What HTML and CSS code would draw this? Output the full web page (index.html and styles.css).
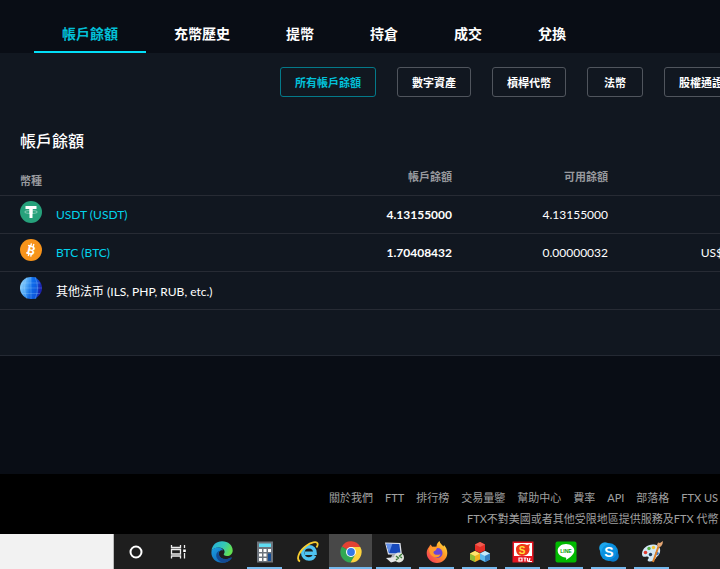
FILE: index.html
```html
<!DOCTYPE html>
<html lang="zh-Hant">
<head>
	<meta charset="UTF-8">
	<meta name="viewport" content="width=device-width, initial-scale=1.0">
	<title>帳戶餘額</title>
	<link rel="stylesheet" href="styles.css">
</head>
<body>
	<nav class="tabs">
		<a class="tab active" href="#balances">帳戶餘額</a>
		<a class="tab" href="#deposits">充幣歷史</a>
		<a class="tab" href="#withdraw">提幣</a>
		<a class="tab" href="#positions">持倉</a>
		<a class="tab" href="#fills">成交</a>
		<a class="tab" href="#convert">兌換</a>
	</nav>

	<main class="panel">
		<div class="filters">
			<button class="filter active">所有帳戶餘額</button>
			<button class="filter">數字資產</button>
			<button class="filter">槓桿代幣</button>
			<button class="filter">法幣</button>
			<button class="filter">股權通證</button>
		</div>
		<h1>帳戶餘額</h1>
		<table class="balances">
			<thead>
				<tr>
					<th class="coin-col">幣種</th>
					<th class="num-col">帳戶餘額</th>
					<th class="num-col">可用餘額</th>
					<th class="usd-col"></th>
				</tr>
			</thead>
			<tbody>
				<tr>
					<td>
						<div class="coin">
							<svg class="coin-icon" viewBox="0 0 22 22">
								<circle cx="11" cy="11" r="11" fill="#26a17b"/>
								<path d="M5.500 5h11v3h-4v9h-3V8h-4z" fill="#fff"/>
								<ellipse cx="11" cy="11" rx="6.500" ry="1.500" fill="none" stroke="#a8dac9" stroke-width=".7"/>
								<path d="M9.500 8h3v5h-3z" fill="#fff"/>
							</svg>
							<a href="#usdt">USDT (USDT)</a>
						</div>
					</td>
					<td class="total">4.13155000</td>
					<td>4.13155000</td>
					<td></td>
				</tr>
				<tr>
					<td>
						<div class="coin">
							<svg class="coin-icon" viewBox="0 0 22 22">
								<circle cx="11" cy="11" r="11" fill="#f7931a"/>
								<g transform="rotate(14 11 11)">
									<path d="M9.800 4.500v3M12.300 4.500v3M9.800 14.500v3M12.300 14.500v3M7 7.300h3M7 14.800h3" stroke="#fff" stroke-width="1.400"/>
									<text class="btc-letter" x="11.300" y="15.500" text-anchor="middle">B</text>
								</g>
							</svg>
							<a href="#btc">BTC (BTC)</a>
						</div>
					</td>
					<td class="total">1.70408432</td>
					<td>0.00000032</td>
					<td>US$</td>
				</tr>
				<tr>
					<td>
						<div class="coin">
							<svg class="coin-icon" viewBox="0 0 22 22">
								<defs>
									<linearGradient id="globe" x1="0" y1="0" x2="1" y2="0.3">
										<stop offset="0" stop-color="#a5e2ff"/>
										<stop offset=".4" stop-color="#4aa3f5"/>
										<stop offset=".6" stop-color="#1672e8"/>
										<stop offset="1" stop-color="#1b22ae"/>
									</linearGradient>
								</defs>
								<circle cx="11" cy="11" r="11" fill="url(#globe)"/>
								<path d="M11 0h5c3 5 3 17 0 22h-5z" fill="#0868ed" opacity=".6"/>
								<path d="M2 6h18M0 11h22M2 16.500h18M11 0v22M7 0q-5 11 0 22M15 0q5 11 0 22" fill="none" stroke="#b5e3ff" stroke-width=".7" opacity=".35"/>
							</svg>
							<span>其他法币 (ILS, PHP, RUB, etc.)</span>
						</div>
					</td>
					<td></td>
					<td></td>
					<td></td>
				</tr>
			</tbody>
		</table>
	</main>

	<footer class="footer">
		<div class="footer-links">
			<a href="#about">關於我們</a>
			<a href="#ftt">FTT</a>
			<a href="#leaderboard">排行榜</a>
			<a href="#volume">交易量鑒</a>
			<a href="#help">幫助中心</a>
			<a href="#fees">費率</a>
			<a href="#api">API</a>
			<a href="#blog">部落格</a>
			<a href="#us">FTX US</a>
		</div>
		<p>FTX不對美國或者其他受限地區提供服務及FTX 代幣（</p>
	</footer>

	<div class="taskbar">
		<input class="search" type="text" aria-label="Search">
		<button class="task" aria-label="Cortana">
			<svg viewBox="0 0 22 22"><circle cx="11" cy="11" r="5.500" fill="none" stroke="#fff" stroke-width="2"/></svg>
		</button>
		<button class="task" aria-label="Task View">
			<svg viewBox="0 0 22 22">
				<path d="M3.500 4v2.500h9V4M3.500 17.500V15h9v2.500M3.500 8.500h9v4.500h-9zM16.500 4v3M16.500 12v5.500" fill="none" stroke="#eee" stroke-width="1.300"/>
				<path d="M15.200 8.500h2.600v2.500h-2.600z" fill="#fff"/>
			</svg>
		</button>
		<button class="task" aria-label="Edge">
			<svg viewBox="0 0 22 22">
				<defs>
					<linearGradient id="edgeTop" x1="0" y1="0" x2="1" y2=".4">
						<stop offset="0" stop-color="#24a9df"/>
						<stop offset=".6" stop-color="#35c9b5"/>
						<stop offset="1" stop-color="#62e052"/>
					</linearGradient>
					<linearGradient id="edgeLow" x1="0" y1="0" x2="1" y2="1">
						<stop offset="0" stop-color="#1b9de2"/>
						<stop offset="1" stop-color="#0d59a9"/>
					</linearGradient>
				</defs>
				<path d="M.5 10C1 4 5.500.3 11 .3c6.500 0 10.700 4.200 10.700 9.200 0 3.500-2.700 5.500-5.700 5.500-2.500 0-4-1-3-2.200C15 10 12 6.500 8 6.500 4.500 6.500 1.500 8 .5 10z" fill="url(#edgeTop)"/>
				<path d="M.4 11C.7 8 4 6.300 8 6.500c2 .1 4 1.500 4 3-3-1-5 2-4 4.800 1.500 4 7 5.500 12 2.200.6-.3.900.1.500.700C18.500 20.200 15 21.800 11 21.800 5 21.800 0 17 .4 11z" fill="url(#edgeLow)"/>
				<path d="M8.300 9.700c-3 1.300-4 5-2 8 1.500 2.300 4 3.800 6.700 4 3-.2 6-2 7.500-4.500.4-.6.100-1-.5-.7-5 3-10.500 1.500-12-2.200-.7-1.800-.5-3.400.3-4.600z" fill="#124a93"/>
			</svg>
		</button>
		<button class="task running" aria-label="Calculator">
			<svg viewBox="0 0 22 22">
				<path d="M3 .5h16v21H3z" fill="#6d747d"/>
				<path d="M5 2.500h12v3.500H5z" fill="#5fdcf2"/>
				<path d="M5 8h3v3H5zM9.500 8h3v3h-3zM14 8h3v3h-3zM5 12.500h3v3H5zM9.500 12.500h3v3h-3zM5 17h3v3H5zM9.500 17h3v3h-3z" fill="#fff"/>
				<path d="M14 12.500h3V20h-3z" fill="#154c92"/>
			</svg>
		</button>
		<button class="task" aria-label="Internet Explorer">
			<svg viewBox="0 0 22 22">
				<path d="M17.500 14.500c-1 2.300-3 3.500-5.500 3.500-3.500 0-6.200-2.500-6.200-6s2.700-6.200 6.200-6.200c3.700 0 6 2.400 6 6.400H8" fill="none" stroke="#4fc4f2" stroke-width="3.600"/>
				<path d="M3 20.500C-1.500 18 2.500 9.500 9 5c5-3.700 10.500-5 11.500-2.700.5 1.200 0 2.700-1 4.200" fill="none" stroke="#f8ce31" stroke-width="1.800"/>
			</svg>
		</button>
		<button class="task running current" aria-label="Chrome">
			<svg viewBox="0 0 22 22">
				<path d="M11 11L1.900 5.500A10.500 10.500 0 0 1 20.300 6H11z" fill="#e34133"/>
				<path d="M11 11L1.900 5.500A10.500 10.500 0 0 0 10.500 21.500L15.300 13.500z" fill="#31a852"/>
				<path d="M11 6h9.300A10.500 10.500 0 0 1 10.500 21.500l4.800-8z" fill="#fdd33d"/>
				<circle cx="11" cy="11" r="5" fill="#fff"/>
				<circle cx="11" cy="11" r="3.900" fill="#3478e6"/>
			</svg>
		</button>
		<button class="task running" aria-label="Remote">
			<svg viewBox="0 0 22 22">
				<path d="M2 1.500l15.500.5 1.500 12-14-.5z" fill="#dfe3ec"/>
				<path d="M3.300 2.800l13 .3 1.200 9.500-11.500-.4z" fill="#1649bc"/>
				<path d="M3.300 2.800l6 .1L6 12.200z" fill="#6492ec"/>
				<path d="M9 14h4l1 3H8z" fill="#aeb4bd"/>
				<path d="M3 17l10-1 4 3-9 2.500z" fill="#e3e5e7"/>
				<circle cx="16" cy="16.500" r="5" fill="#e2e5dd"/>
				<path d="M13 15l2.500 2-2.500 2M19 13l-2.500 2 2.500 2" fill="none" stroke="#387c38" stroke-width="1.300"/>
			</svg>
		</button>
		<button class="task running" aria-label="Firefox">
			<svg viewBox="0 0 22 22">
				<defs>
					<linearGradient id="fox" x1="1" y1="0" x2="0" y2="1">
						<stop offset="0" stop-color="#fff04a"/>
						<stop offset=".4" stop-color="#ff9b25"/>
						<stop offset="1" stop-color="#f42c60"/>
					</linearGradient>
				</defs>
				<path d="M4.500 3.500L6.500 6l4-.5C10.500 3 12 1 13.500 0c.5 2.500 2.500 3.500 4 5.500l.5-1.500c2 2 3.300 4.800 3.300 8C21.300 17.500 16.700 22 11 22S.7 17.500.7 12c0-2.500.9-4.500 2.300-6z" fill="url(#fox)"/>
				<circle cx="11.500" cy="12" r="5" fill="#6b45d8"/>
				<path d="M3 7c3-2 6-1.500 8 .5L9 10c-2 0-2 2.500 0 3.500 2.500 1 4-.5 5.500 0-1 2.500-4 3.500-6.500 2.500C4 14.500 3 10.500 3 7z" fill="#ff9a2c"/>
			</svg>
		</button>
		<button class="task running" aria-label="Cubes">
			<svg viewBox="0 0 22 22">
				<path d="M11 1l5 2.500v6L11 12 6 9.500v-6z" fill="#e52e26"/>
				<path d="M11 1l5 2.500-5 2.500-5-2.500z" fill="#ee5c50"/>
				<path d="M6 10l5 2.500v6L6 21l-5-2.500v-6z" fill="#f4b321"/>
				<path d="M1 12.500L6 15v6l-5-2.500z" fill="#8fbd37"/>
				<path d="M6 10l5 2.500L6 15l-5-2.500z" fill="#ffe36e"/>
				<path d="M16 10l5 2.500v6L16 21l-5-2.500v-6z" fill="#5cb7ed"/>
				<path d="M16 10l5 2.500-5 2.500-5-2.500z" fill="#c5e8fa"/>
				<path d="M16 15l5-2.500v6L16 21z" fill="#347fc3"/>
			</svg>
		</button>
		<button class="task running" aria-label="Stocks">
			<svg viewBox="0 0 22 22">
				<path d="M.5.500h21v21H.5z" fill="#e51420"/>
				<path d="M2 2h18v13H2z" fill="#fff"/>
				<path d="M4 8c0-5 7-6 11-4l3-1-1 3c2 5-2 9-7 9-4 0-6-3-6-7z" fill="#ef3518"/>
				<text class="stock-letter" x="10" y="12.500" text-anchor="middle">S</text>
				<path d="M7 17h3v3H7zM11.500 17h3M13 17v3.500M15.500 17v3h1M18 17l-1 3.500h3" fill="none" stroke="#fff" stroke-width="1.200"/>
			</svg>
		</button>
		<button class="task running" aria-label="LINE">
			<svg viewBox="0 0 22 22">
				<rect x=".5" y=".5" width="21" height="21" rx="2" fill="#00b900"/>
				<path d="M11 3c4.700 0 8.300 2.900 8.300 6.700 0 3.500-4.300 6.800-8.300 9.300.3-1.200.5-2.400-.5-2.600C6 16 2.700 13.300 2.700 9.700 2.700 5.900 6.300 3 11 3z" fill="#fff"/>
				<text class="line-letters" x="11" y="12" text-anchor="middle">LINE</text>
			</svg>
		</button>
		<button class="task running" aria-label="Skype">
			<svg viewBox="0 0 22 22">
				<circle cx="11" cy="11" r="9" fill="#0a90df"/>
				<circle cx="7" cy="7" r="5.800" fill="#1ba5ec"/>
				<circle cx="15" cy="15" r="5.800" fill="#087bce"/>
				<circle cx="11" cy="11" r="7.500" fill="#0b91e0"/>
				<text class="skype-letter" x="11" y="15.800" text-anchor="middle">S</text>
			</svg>
		</button>
		<button class="task running" aria-label="Paint">
			<svg viewBox="0 0 22 22">
				<path d="M1 13C1 7 7 3 13 3.500c4.500.5 7 3.500 6 7.500s-3 4-4 6-4 4-7 3.500c-2-.4-1.500-2-.5-3s-.5-2.500-2-2c-2 .7-4.500.5-4.500-2.500z" fill="#d2e7f5"/>
				<circle cx="4.500" cy="11.500" r="1.800" fill="#df3a32"/>
				<circle cx="8" cy="7.500" r="1.700" fill="#55ad44"/>
				<circle cx="12.500" cy="6.500" r="1.700" fill="#f3c533"/>
				<circle cx="16" cy="12.500" r="1.800" fill="#3a79c8"/>
				<circle cx="9.500" cy="13.500" r="1.700" fill="#1d3a5a"/>
				<path d="M18 4l-6 17" stroke="#dc7f29" stroke-width="2"/>
				<path d="M16 4l1-2.500 2 .5 3-2-.5 3-1.500 2.500-2 .5z" fill="#e4a673"/>
			</svg>
		</button>
	</div>
</body>
</html>
```

FILE: styles.css
```css
* {
	box-sizing: border-box;
}

body {
	margin: 0;
	min-height: 100vh;
	display: flex;
	flex-direction: column;
	overflow-x: hidden;
	font-family: Lato, "Noto Sans CJK TC", sans-serif;
	font-size: 12px;
	color: #fff;
	background-color: #090d15;
}

a {
	color: #02d3ec;
	text-decoration: none;
}

.tabs {
	display: flex;
	padding: 16px 34px 0;
}

.tab {
	padding: 0 28px;
	font-size: 14px;
	font-weight: bold;
	line-height: 35px;
	color: #fff;
	border-bottom: 2px solid transparent;
}

.tab.active {
	color: #02c0d8;
	border-bottom-color: #02def7;
}

.panel {
	padding: 14px 0 45px;
	overflow: hidden;
	background-color: #111720;
	border-bottom: 1px solid #242933;
}

.filters {
	display: flex;
	gap: 21px;
	margin-left: 280px;
}

.filter {
	flex: none;
	height: 30px;
	min-width: 56px;
	padding: 0 14px;
	font-family: inherit;
	font-size: 11px;
	font-weight: bold;
	color: #fff;
	background: none;
	border: 1px solid #50555d;
	border-radius: 3px;
	cursor: pointer;
}

.filter.active {
	color: #02c0d8;
	border-color: #047989;
}

h1 {
	margin: 32px 20px 0;
	font-size: 16px;
	font-weight: 500;
	line-height: 24px;
}

/* last column runs past the right edge */
.balances {
	width: calc(100% + 23px);
	table-layout: fixed;
	border-collapse: collapse;
}

.balances th {
	height: 42px;
	padding: 5px 20px 0;
	font-size: 11px;
	font-weight: bold;
	text-align: right;
	color: #989a9e;
}

.balances .coin-col {
	padding-top: 12px;
	text-align: left;
}

.num-col {
	width: 156px;
}

.usd-col {
	width: 115px;
}

.balances tr {
	border-bottom: 1px solid #272b34;
}

.balances td {
	height: 38px;
	padding: 0 20px;
	text-align: right;
	white-space: nowrap;
}

.balances .total {
	font-weight: bold;
}

.coin {
	display: flex;
	align-items: center;
	gap: 14px;
}

.coin-icon {
	width: 22px;
	height: 22px;
	margin-bottom: 4px;
}

.btc-letter {
	font-size: 12px;
	font-weight: 900;
	fill: #fff;
}

.footer {
	height: 60px;
	margin-top: auto;
	padding: 15px 0 0 329px;
	overflow: hidden;
	font-size: 11px;
	line-height: 18px;
	white-space: nowrap;
	color: #a0a0a0;
	background-color: #000;
}

.footer-links {
	display: flex;
	gap: 12px;
}

.footer-links a {
	flex: none;
	color: inherit;
}

.footer p {
	margin: 3px 0 0 138px;
}

.taskbar {
	display: flex;
	height: 35px;
	background-color: #1e1e1e;
}

.search {
	width: 114px;
	padding: 0 10px;
	background-color: #f2f2f2;
	border: none;
	border-right: 1px solid #bbb;
}

.task {
	display: flex;
	align-items: center;
	justify-content: center;
	width: 43px;
	padding: 0;
	background: none;
	border: none;
}

.task svg {
	width: 22px;
	height: 22px;
}

.task.running {
	background: linear-gradient(#76b9ed, #76b9ed) center bottom / 35px 2px no-repeat;
}

.task.current {
	background-color: #484848;
	background-size: 100% 2px;
}

.stock-letter {
	font-size: 10px;
	font-weight: 900;
	fill: #ffe23b;
}

.line-letters {
	font-size: 5px;
	font-weight: 900;
	fill: #00a000;
}

.skype-letter {
	font-size: 14px;
	font-weight: bold;
	fill: #fff;
}
```
